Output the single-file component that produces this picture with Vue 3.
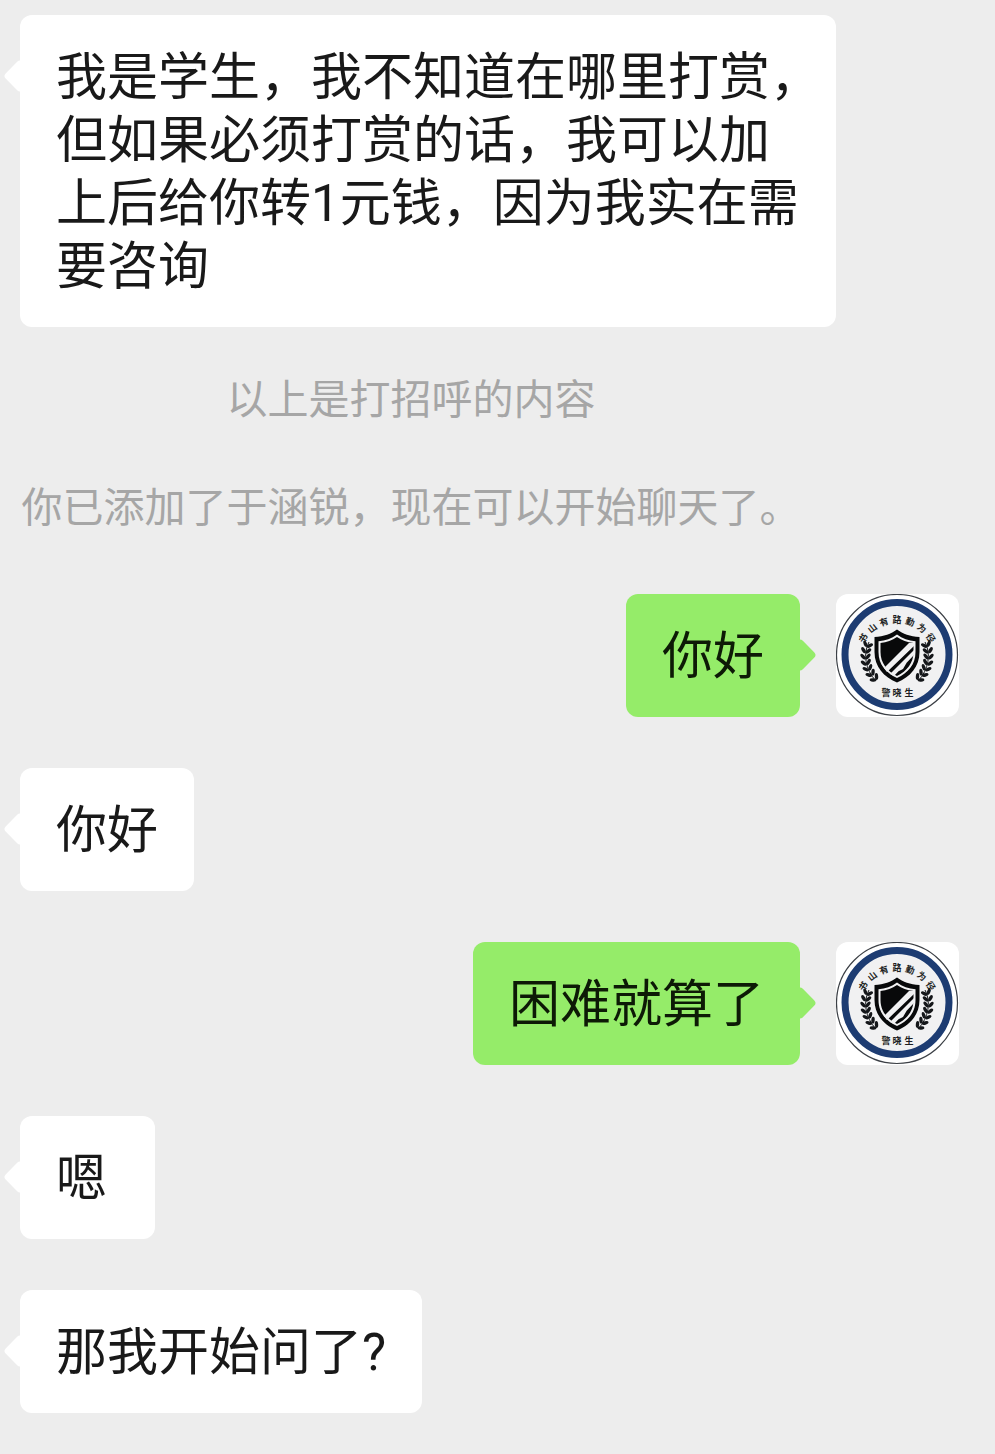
<template>
  <main class="chat">
    <template v-for="item in items" :key="item.id">
      <p v-if="item.type === 'notice'" class="notice">{{ item.text }}</p>

      <article v-else :class="['message', { 'is-mine': item.mine }]">
        <div class="bubble">{{ item.text }}</div>

        <svg v-if="item.mine" class="avatar" viewBox="0 0 123 123" aria-hidden="true">
          <rect width="123" height="123" fill="#ffffff" />
          <circle cx="61" cy="61" r="60.5" fill="#ffffff" stroke="#3c4046" stroke-width="1.2" />
          <circle cx="61" cy="60.5" r="52" fill="#f1f1f2" stroke="#1d3c72" stroke-width="7" />

          <text
            v-for="(char, index) in motto"
            :key="char"
            class="badge-text"
            x="61"
            y="26"
            :transform="`rotate(${(index - 3) * 19} 61 66)`"
          >{{ char }}</text>

          <path
            d="M61 35.5C55 40 48 42.5 38.5 43V58C38.5 73 48 83 61 88.5C74 83 83.5 73 83.5 58V43C74 42.5 67 40 61 35.5Z"
            fill="#08090a"
          />
          <path
            d="M61 40.5C55.5 44.5 49.5 46.7 42.5 47.2V58C42.5 70.5 50 79 61 84C72 79 79.5 70.5 79.5 58V47.2C72.5 46.7 66.5 44.5 61 40.5Z"
            fill="#f1f1f2"
          />
          <path
            d="M61 43C56 46.5 51 48.4 44.5 49V58C44.5 69 51 77 61 82C71 77 77.5 69 77.5 58V49C71 48.4 66 46.5 61 43Z"
            fill="#08090a"
          />
          <path
            d="M48 74L73 49L78 49V52L51 78ZM54 80L78 56V61L58 82ZM70 66L74 63L67 75L61 78Z"
            fill="#f1f1f2"
          />

          <g v-for="side in ['left', 'right']" :key="side" :transform="side === 'right' ? 'matrix(-1 0 0 1 122 0)' : null">
            <path d="M33 48C27 60 29 75 40 87" fill="none" stroke="#15171a" stroke-width="1" />
            <ellipse
              v-for="(leaf, index) in leaves"
              :key="index"
              rx="3.4"
              ry="1.7"
              fill="#15171a"
              :transform="`translate(${leaf.x} ${leaf.y}) rotate(${leaf.angle})`"
            />
          </g>

          <text class="badge-text" x="50" y="99">警</text>
          <text class="badge-text" x="61" y="99">晓</text>
          <text class="badge-text" x="73" y="99">生</text>
        </svg>
      </article>
    </template>
  </main>
</template>

<script setup>
const items = [
  {
    id: 1,
    type: "message",
    text: "我是学生，我不知道在哪里打赏，\n但如果必须打赏的话，我可以加\n上后给你转1元钱，因为我实在需\n要咨询"
  },
  { id: 2, type: "notice", text: "以上是打招呼的内容" },
  { id: 3, type: "notice", text: "你已添加了于涵锐，现在可以开始聊天了。" },
  { id: 4, type: "message", mine: true, text: "你好" },
  { id: 5, type: "message", text: "你好" },
  { id: 6, type: "message", mine: true, text: "困难就算了" },
  { id: 7, type: "message", text: "嗯" },
  { id: 8, type: "message", text: "那我开始问了?" }
];

const motto = [..."书山有路勤为径"];

// Leaf pairs of one laurel branch, from the tip down to the stem.
const leaves = Array.from({ length: 7 }, (_, index) => {
  const degrees = 201 - index * 11;
  const radians = (degrees * Math.PI) / 180;

  return [
    { radius: 34, angle: degrees - 130 },
    { radius: 29, angle: degrees - 50 }
  ].map(({ radius, angle }) => ({
    x: Math.round((61 + radius * Math.cos(radians)) * 10) / 10,
    y: Math.round((62 + radius * Math.sin(radians)) * 10) / 10,
    angle
  }));
}).flat();
</script>

<style>
body {
  margin: 0;
  background: #ededed;
}
</style>

<style scoped>
.chat {
  display: flex;
  flex-direction: column;
  gap: 51px;
  padding: 15px 0 41px;
  background: #ededed;
  color: #191919;
  font-family: Roboto, "Noto Sans CJK SC", sans-serif;
}

.notice {
  margin: 0 173px 0 0;
  padding-bottom: 12px;
  color: #a6a6a6;
  font-size: 41px;
  line-height: 45px;
  text-align: center;
}

.message {
  display: flex;
  align-items: flex-start;
  gap: 36px;
  padding: 0 36px 0 20px;
}

.message.is-mine {
  justify-content: flex-end;
}

.bubble {
  position: relative;
  box-sizing: border-box;
  min-width: 135px;
  max-width: 816px;
  padding: 31px 36px 29px;
  border-radius: 12px;
  background: #ffffff;
  font-size: 51px;
  line-height: 63px;
  white-space: pre;
}

.bubble::before {
  position: absolute;
  top: 49px;
  left: -12px;
  width: 24px;
  height: 24px;
  border-radius: 4px;
  background: inherit;
  content: "";
  transform: rotate(45deg);
}

.is-mine .bubble {
  background: #95ec69;
  color: #0d1a06;
}

.is-mine .bubble::before {
  right: -12px;
  left: auto;
}

.avatar {
  width: 123px;
  height: 123px;
  flex-shrink: 0;
  border-radius: 12px;
}

.badge-text {
  fill: #1c1e22;
  font-size: 9px;
  font-weight: 700;
  text-anchor: middle;
  dominant-baseline: central;
}
</style>
